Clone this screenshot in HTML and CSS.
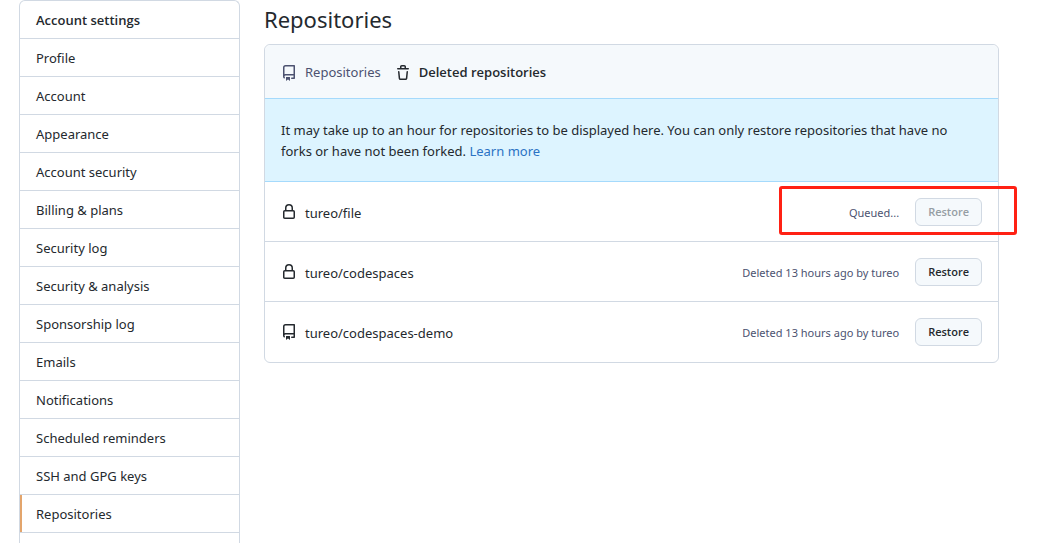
FILE: index.html
```html
<!DOCTYPE html>
<html lang="en">
<head>
<meta charset="utf-8">
<title>Repositories</title>
<link rel="stylesheet" href="styles.css">
</head>
<body>
<svg class="sprite" aria-hidden="true">
  <symbol id="repo" viewBox="0 0 16 16"><path fill-rule="evenodd" d="M2 2.5A2.500 2.500 0 0 1 4.500 0h8.750a.75.75 0 0 1 .75.75v12.500a.75.75 0 0 1-.75.75h-2.500a.75.75 0 1 1 0-1.500h1.750v-2h-8a1 1 0 0 0-.714 1.700.75.75 0 0 1-1.072 1.050A2.495 2.495 0 0 1 2 11.500v-9zm10.500-1V9h-8c-.356 0-.694.074-1 .208V2.500a1 1 0 0 1 1-1h8zM5 12.250v3.250a.25.25 0 0 0 .4.200l1.450-1.087a.25.25 0 0 1 .3 0L8.600 15.700a.25.25 0 0 0 .4-.2v-3.250a.25.25 0 0 0-.25-.25h-3.500a.25.25 0 0 0-.25.25z"/></symbol>
  <symbol id="lock" viewBox="0 0 16 16"><path fill-rule="evenodd" d="M4 4v2h-.25A1.750 1.750 0 0 0 2 7.750v5.500c0 .966.784 1.750 1.750 1.750h8.500A1.750 1.750 0 0 0 14 13.250v-5.500A1.750 1.750 0 0 0 12.250 6H12V4a4 4 0 1 0-8 0zm6.500 2V4a2.500 2.500 0 1 0-5 0v2h5zM12 7.500h.25a.25.25 0 0 1 .25.25v5.500a.25.25 0 0 1-.25.25h-8.500a.25.25 0 0 1-.25-.25v-5.500a.25.25 0 0 1 .25-.25H12z"/></symbol>
  <symbol id="trash" viewBox="0 0 16 16"><path fill-rule="evenodd" d="M6.500 1.750a.25.25 0 0 1 .25-.25h2.500a.25.25 0 0 1 .25.25V3h-3V1.750zm4.500 0V3h2.250a.75.75 0 0 1 0 1.500H2.750a.75.75 0 0 1 0-1.500H5V1.750C5 .784 5.784 0 6.750 0h2.500C10.216 0 11 .784 11 1.750zM4.496 6.675a.75.75 0 1 0-1.492.150l.66 6.600A1.750 1.750 0 0 0 5.405 15h5.190c.9 0 1.652-.681 1.741-1.576l.66-6.600a.75.75 0 0 0-1.492-.149l-.66 6.600a.25.25 0 0 1-.249.225h-5.190a.25.25 0 0 1-.249-.225l-.66-6.600z"/></symbol>
</svg>
<div class="page">
  <nav class="menu" aria-label="Account settings">
    <h2 class="menu-title">Account settings</h2>
    <a class="menu-item" href="#">Profile</a>
    <a class="menu-item" href="#">Account</a>
    <a class="menu-item" href="#">Appearance</a>
    <a class="menu-item" href="#">Account security</a>
    <a class="menu-item" href="#">Billing &amp; plans</a>
    <a class="menu-item" href="#">Security log</a>
    <a class="menu-item" href="#">Security &amp; analysis</a>
    <a class="menu-item" href="#">Sponsorship log</a>
    <a class="menu-item" href="#">Emails</a>
    <a class="menu-item" href="#">Notifications</a>
    <a class="menu-item" href="#">Scheduled reminders</a>
    <a class="menu-item" href="#">SSH and GPG keys</a>
    <a class="menu-item current" href="#" aria-current="page">Repositories</a>
  </nav>
  <main class="content">
    <h1 class="title">Repositories</h1>
    <section class="box">
      <div class="tabs">
        <a class="tab" href="#"><svg class="icon"><use href="#repo"/></svg>Repositories</a>
        <a class="tab selected" href="#"><svg class="icon"><use href="#trash"/></svg>Deleted repositories</a>
      </div>
      <p class="flash">It may take up to an hour for repositories to be displayed here. You can only restore repositories that have no forks or have not been forked. <a class="link" href="#">Learn more</a></p>
      <div class="row">
        <svg class="icon"><use href="#lock"/></svg>
        <span class="name">tureo/file</span>
        <span class="status">Queued...</span>
        <button class="btn" type="button" disabled>Restore</button>
        <span class="highlight"></span>
      </div>
      <div class="row">
        <svg class="icon"><use href="#lock"/></svg>
        <span class="name">tureo/codespaces</span>
        <span class="status">Deleted 13 hours ago by tureo</span>
        <button class="btn" type="button">Restore</button>
      </div>
      <div class="row">
        <svg class="icon"><use href="#repo"/></svg>
        <span class="name">tureo/codespaces-demo</span>
        <span class="status">Deleted 13 hours ago by tureo</span>
        <button class="btn" type="button">Restore</button>
      </div>
    </section>
  </main>
</div>
</body>
</html>
```

FILE: styles.css
```css
* { box-sizing: border-box; }
body {
  margin: 0;
  background: #fff;
  color: #24292e;
  font: 13px/21px "Noto Sans", "Open Sans", sans-serif;
}
a { color: inherit; text-decoration: none; }
.sprite { display: none; }
.page {
  display: flex;
  gap: 24px;
  min-height: 100vh;
  padding: 0 46px 0 19px;
}
.menu {
  flex: 0 0 221px;
  border: 1px solid #d1d9e3;
  border-bottom: 0;
  border-radius: 6px 6px 0 0;
}
.menu-title, .menu-item {
  display: block;
  margin: 0;
  padding: 9px 16px 7px;
  border-bottom: 1px solid #d1d9e3;
  font-size: 13px;
  font-weight: 400;
}
.menu-title { font-family: "Open Sans", "Noto Sans", sans-serif; font-weight: 600; }
.current { box-shadow: inset 2px 0 #e3a56c; }
.content { flex: 1; min-width: 0; }
.title {
  margin: 0 0 9px;
  padding-top: 3px;
  font-size: 22px;
  line-height: 32px;
  font-weight: 400;
}
.box {
  border: 1px solid #d1d9e3;
  border-radius: 6px;
}
.tabs {
  display: flex;
  gap: 14px;
  padding: 17px 16px 15px;
  background: #f5f9fc;
  border-radius: 6px 6px 0 0;
}
.tab {
  display: flex;
  align-items: center;
  gap: 8px;
  color: #4c5270;
}
.selected { color: #24292e; font-family: "Open Sans", "Noto Sans", sans-serif; font-weight: 600; }
.icon {
  flex: none;
  width: 16px;
  height: 16px;
  fill: currentColor;
}
.flash {
  margin: 0;
  padding: 21px 26px 19px 16px;
  border: solid #a5dafc;
  border-width: 1px 0;
  background: #ddf4ff;
}
.link { color: #2a72c4; }
.row {
  position: relative;
  display: flex;
  align-items: center;
  padding: 16px 16px 15px;
}
.row + .row { border-top: 1px solid #d1d9e3; }
.row:last-child { padding-bottom: 16px; }
.name { flex: 1; margin-left: 8px; padding-top: 2px; }
.status { margin-right: 16px; color: #4c5270; font-size: 11px; }
.btn {
  padding: 3px 12px;
  border: 1px solid #d1d9e3;
  border-radius: 6px;
  background: #f5f9fc;
  color: #24292e;
  font: 600 11px/20px "Open Sans", "Noto Sans", sans-serif;
}
.btn:disabled { color: #969ea4; }
.highlight {
  position: absolute;
  top: 4px;
  right: -19px;
  width: 238px;
  height: 49px;
  border: 3px solid #ff2114;
  border-radius: 3px;
}
```
